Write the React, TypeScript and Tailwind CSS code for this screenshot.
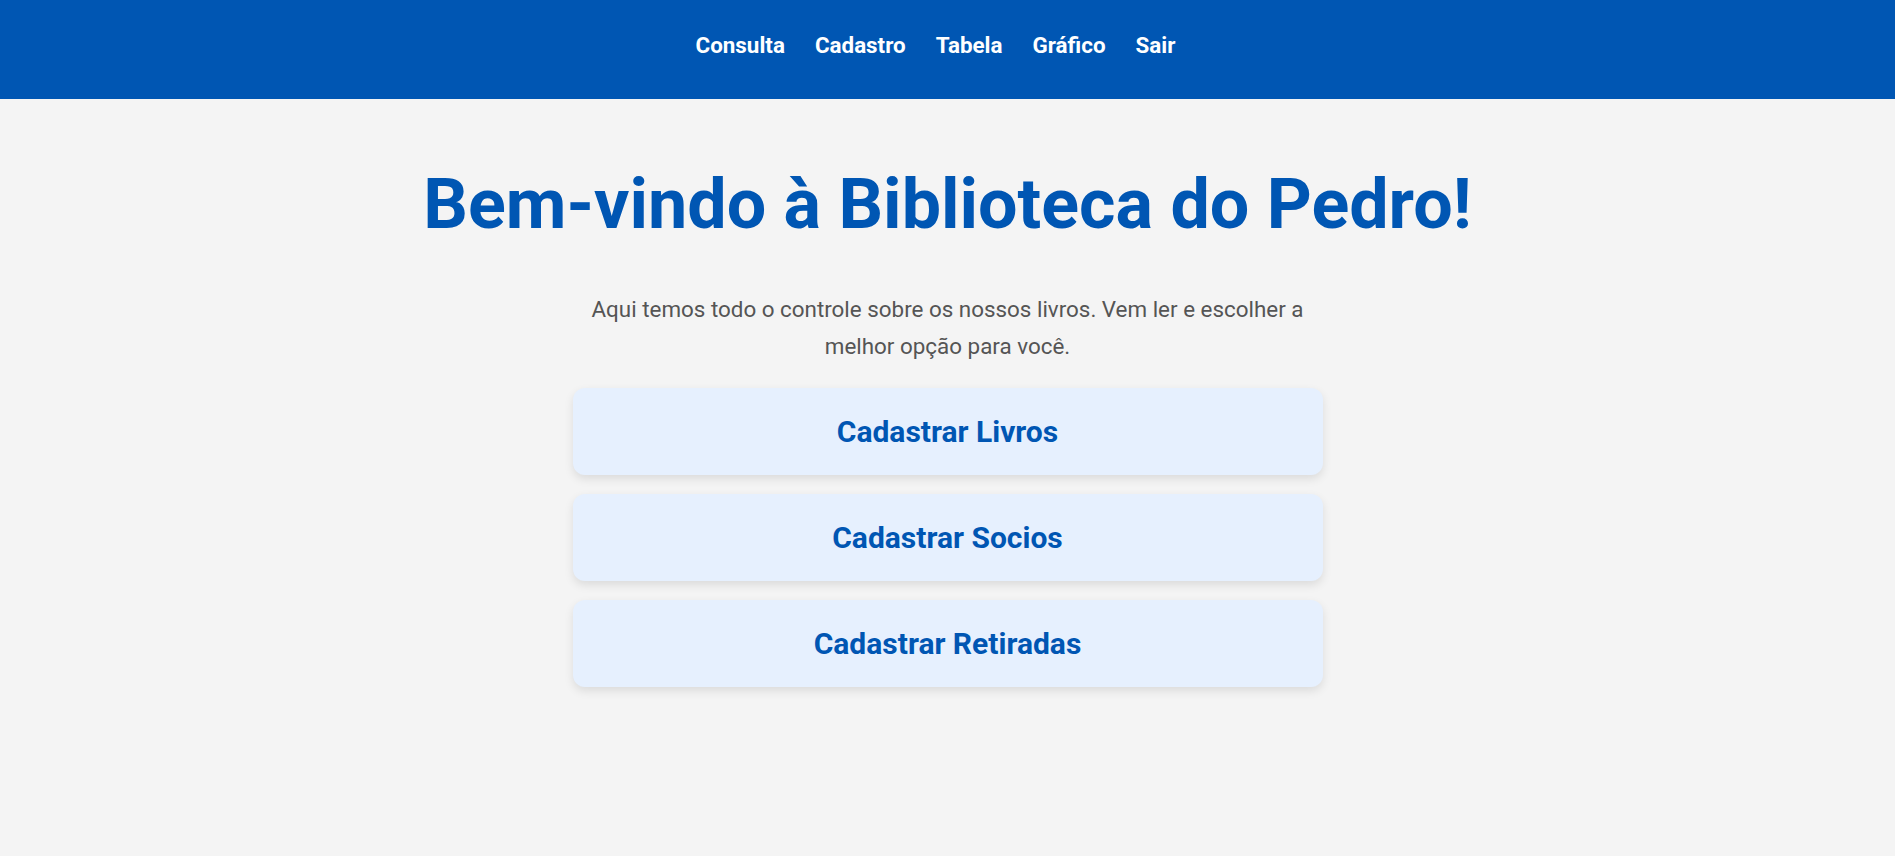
import React from "react";

const navItems = ["Consulta", "Cadastro", "Tabela", "Gráfico", "Sair"];
const cards = ["Cadastrar Livros", "Cadastrar Socios", "Cadastrar Retiradas"];

export default function App() {
  return (
    <div
      className="min-h-screen bg-[#f4f4f4]"
      style={{ fontFamily: "Roboto, 'Noto Sans', sans-serif" }}
    >
      <header className="h-[99px] bg-[#0056b3] flex items-center justify-center">
        <nav className="flex items-center gap-[30px] pr-[24px] pb-[8px]">
          {navItems.map((item) => (
            <a
              key={item}
              href="#"
              className="text-white font-bold text-[22.4px] leading-none"
            >
              {item}
            </a>
          ))}
        </nav>
      </header>
      <main className="flex flex-col items-center">
        <h1 className="mt-[63px] text-[#0056b3] font-bold text-[70px] leading-[84px] text-center">
          Bem-vindo à Biblioteca do Pedro!
        </h1>
        <p className="mt-[45px] w-[750px] text-center text-[#555555] text-[22.4px] leading-[37px]">
          Aqui temos todo o controle sobre os nossos livros. Vem ler e escolher a melhor opção para você.
        </p>
        <div className="mt-[23px] w-[750px] flex flex-col gap-[19px]">
          {cards.map((c) => (
            <a
              key={c}
              href="#"
              className="h-[87px] rounded-[12px] bg-[#e6f0fe] shadow-[0_4px_10px_rgba(0,0,0,0.1)] flex items-center justify-center text-[#0056b3] font-bold text-[30px]"
            >
              {c}
            </a>
          ))}
        </div>
      </main>
    </div>
  );
}
